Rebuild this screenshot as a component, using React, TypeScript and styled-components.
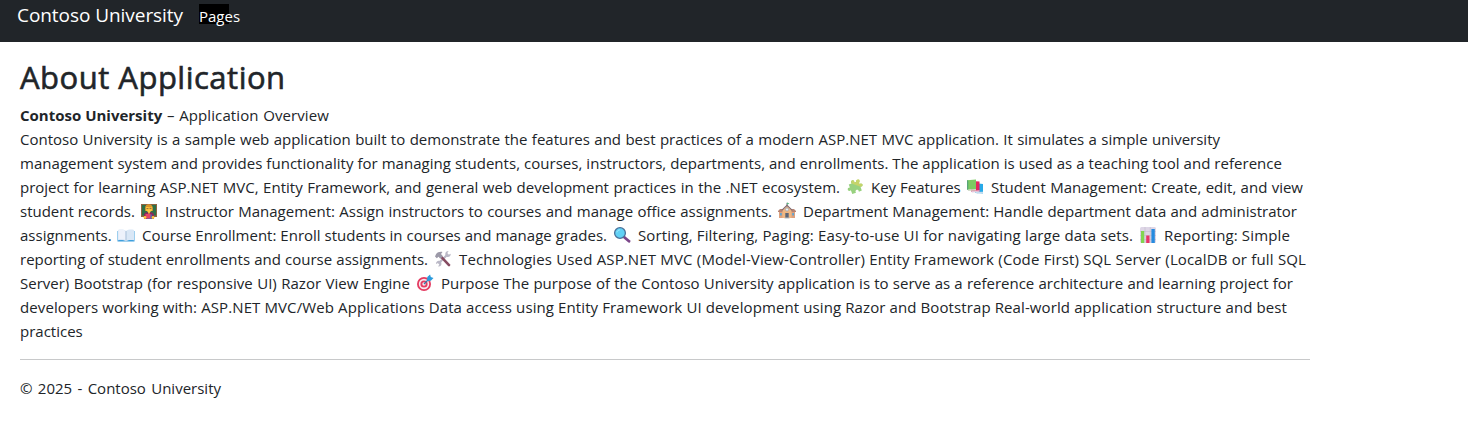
import React, { ReactNode } from "react";
import styled, { createGlobalStyle } from "styled-components";

const GlobalStyle = createGlobalStyle`
  body {
    margin: 0;
    background: #fff;
    color: #212529;
    font-family: "Segoe UI", "Open Sans", "Noto Sans", sans-serif;
    font-size: 15px;
    line-height: 24px;
  }
`;

const Navbar = styled.header`
  display: flex;
  align-items: flex-start;
  box-sizing: border-box;
  height: 42px;
  padding-left: 17px;
  background: #212529;
  color: #fff;
`;

const Brand = styled.a`
  width: 166px;
  margin-right: 16px;
  font-size: 19px;
  letter-spacing: -0.06px;
  line-height: 30px;
  white-space: nowrap;
  text-align-last: justify;
`;

const NavItem = styled.a`
  width: 30px;
  height: 20px;
  margin-top: 4px;
  background: #000;
  line-height: 25px;
  white-space: nowrap;
`;

const Main = styled.main`
  width: 1290px;
  padding: 16px 0 0 20px;
`;

const Title = styled.h1`
  margin: 0 0 7px;
  font-size: 31px;
  font-weight: 500;
  letter-spacing: 0.5px;
  line-height: 38px;
  -webkit-text-stroke: 0.6px #212529;
`;

const Line = styled.div`
  display: flex;
  height: 24px;
`;

const Run = styled.span<{ $width: number; $bold?: boolean; $tracking?: number }>`
  flex: none;
  width: ${(p) => p.$width}px;
  font-weight: ${(p) => (p.$bold ? 700 : 400)};
  letter-spacing: ${(p) => p.$tracking ?? 0}px;
  white-space: nowrap;
  text-align-last: justify;
`;

const Emoji = styled.svg`
  flex: none;
  width: 18px;
  height: 18px;
  margin: 3px 7px 0 6px;
`;

const Footer = styled.footer`
  margin-top: 16px;
  padding-top: 16px;
  border-top: 1px solid #c8c9ca;
`;

const Icon = ({ children }: { children: ReactNode }) => (
  <Emoji viewBox="0 0 18 18" aria-hidden="true">{children}</Emoji>
);

const Puzzle = () => (
  <Icon>
    <g transform="rotate(-20 9 9)">
      <path d="M4 4.5h3c-1.2-3.6 4.2-3.6 3 0h4.2v3.2c3.6-1.2 3.6 4.2 0 3v4H11c1-3.2-4-3.2-3 0H4v-4c-3.6 1.2-3.6-4.2 0-3Z" fill="#98d17f" />
      <path d="M10 4.5h4.2v3.2c3.6-1.2 3.6 4.2 0 3L7.2 4.5c-1-3.6 4-3.6 2.8 0Z" fill="#c5d46a" />
      <circle cx="13.7" cy="4.6" r="2" fill="#c5d46a" />
    </g>
  </Icon>
);

const Books = () => (
  <Icon>
    <path d="m8 5 9 1v9.5l-8-1Z" fill="#28a9e8" /><path d="m9 14 8-.3v1.8l-6 .2Z" fill="#c4dced" />
    <path d="m5 3 8.5.4v10l-8.5.3Z" fill="#e5265e" /><path d="m5 13 8.5-.8v1.5l-7.5.8Z" fill="#e3c9dc" />
    <path d="m1 2.2 9-.7v9.8l-9 .6Z" fill="#7ccb62" /><path d="m1 2.2 1.3.2v9.5L1 11.6Z" fill="#58a578" />
    <path d="m1.5 11.5 8.5-.6v1.5l-7.7.7Z" fill="#d2dbc9" />
  </Icon>
);

const Teacher = () => (
  <Icon>
    <path fill="#8f6541" d="M1 2h16v13H1Z" /><path fill="#2e7047" d="M2 3h14v10.5H2Z" />
    <path fill="#dc9431" d="M5.2 6C4.8 1 12.8 1 12.8 6v3H5.2Z" /><circle cx="9" cy="6.5" r="3.2" fill="#ffc83d" />
    <path fill="#da9129" d="M5.5 5.3c1-3 5-3.8 6.8 0-3 .5-4-.6-6.8 0Z" />
    <path d="M6.5 6.6h2m1 0h2" stroke="#7d4b3a" strokeWidth=".8" />
    <path fill="#8c285d" d="M4 17v-4c0-2 2-3 5-3s5 1 5 3v4Z" /><path fill="#ffc83d" d="M7.4 9h3.2L9 12.5Z" />
    <path fill="#4c63ac" d="M7 12.5h5V17H7Z" /><path fill="#e34466" d="M5.5 12h5v4.5h-5Z" />
    <circle cx="5" cy="15.5" r="1.4" fill="#ffc83d" /><circle cx="13" cy="15.5" r="1.4" fill="#ffc83d" />
  </Icon>
);

const School = () => (
  <Icon>
    <path d="M9 5V.8" stroke="#6d727c" /><path fill="#57b881" d="m9 .6 2.5.8L9 2.7Z" />
    <path fill="#dda17e" d="M1 9h16v7H1Z" /><path fill="#b78474" d="m0 9 2-2h14l2 2v1H0Z" />
    <path fill="#efb782" d="m4.5 8 4.5-4 4.5 4v8h-9Z" />
    <path d="m3.7 8.3 5.3-5 5.3 5" fill="none" stroke="#806a72" strokeWidth="1.1" />
    <circle cx="9" cy="7.5" r="1.6" fill="#eee" stroke="#8799ac" strokeWidth=".6" />
    <path fill="#5c6779" d="M7.3 11h3.4v5H7.3Z" /><path fill="#61a5cf" d="M2 11h1.8v2.5H2Zm12.2 0H16v2.5h-1.8Z" />
    <path fill="#bbb" d="M6.5 15.5h5v1h-5Z" />
  </Icon>
);

const OpenBook = () => (
  <Icon>
    <path fill="#3d9fdd" d="M.5 5h17v10.5H.5Z" /><path fill="#d9e7f6" d="M1 4c3-.8 6-.4 8 1 2-1.4 5-1.8 8-1v10.3c-3-.8-6-.4-8 1-2-1.4-5-1.8-8-1Z" />
    <path fill="#edf2fb" d="M1.5 4c3-.7 5.5-.4 7 1v9c-2-1.2-4.5-1.2-7-.8Z" />
    <path d="M9 5v9.8" stroke="#9eb9d3" strokeWidth=".8" />
  </Icon>
);

const Magnifier = () => (
  <Icon>
    <path d="m11 11 5 4.3" stroke="#7c468a" strokeWidth="2.8" strokeLinecap="round" />
    <circle cx="7" cy="7" r="5.4" fill="#61d1f5" stroke="#4a719a" strokeWidth="1.3" />
    <path d="M4 6c.3-1.3 1.3-2 2.5-2.1" fill="none" stroke="#a2edff" strokeLinecap="round" />
  </Icon>
);

const Chart = () => (
  <Icon>
    <rect x="1" y="1" width="16" height="16" rx="1.5" fill="#ded6e6" />
    <path d="M1 5.5h16M1 9.5h16M1 13.5h16M6 1v16M11.3 1v16" stroke="#c1bdcd" strokeWidth=".6" />
    <path fill="#82d550" d="M2 5h3.2v12H2Z" /><path fill="#e93468" d="M7.2 9.5h3.3V17H7.2Z" /><path fill="#268bdf" d="M12.4 3h3.4v14h-3.4Z" />
  </Icon>
);

const Tools = () => (
  <Icon>
    <path d="m14 4-9.5 9.5" stroke="#bab8c6" strokeWidth="2.1" />
    <path d="M11.6 5.4c-1-2.4.6-4.4 3-4.3l-1.4 2.2 1.3 1.4 2.2-1c.2 2.7-2 3.8-4 3Z" fill="#bab8c6" />
    <path d="M7.3 12.4c.8 2.6-1 4.3-3.2 4l1.2-2-1.2-1.3-2.1 1c-.2-2.4 1.8-3.9 4-3.1Z" fill="#bab8c6" />
    <path d="m7.5 7.2 7.5 7.9" stroke="#864b61" strokeWidth="2.5" strokeLinecap="round" />
    <path d="m1 6.6 1-2.3C3.5 2.2 6 1.5 8.5 2L7 4l2 2.3-2.7 2.4-1.8-2-1.7 1.5Z" fill="#9c99a8" />
  </Icon>
);

const Target = () => (
  <Icon>
    <circle cx="8" cy="10" r="7" fill="#e43b61" /><circle cx="8" cy="10" r="5.2" fill="#f9e9ef" />
    <circle cx="8" cy="10" r="3.6" fill="#e43b61" /><circle cx="8" cy="10" r="1.7" fill="#f9e9ef" />
    <path d="m8 10 6-6" stroke="#3678a5" strokeWidth="1.2" />
    <path fill="#2b9bdc" d="m11 6 .3-3 2.8-2.6.7 2.7 2.7.8-2.7 2.8-3 .2Z" />
  </Icon>
);

export default function App() {
  return (
    <>
      <GlobalStyle />
      <Navbar>
        <Brand>Contoso University</Brand>
        <NavItem>Pages</NavItem>
      </Navbar>
      <Main>
        <Title>About Application</Title>
        <Line><Run $width={142} $bold>Contoso University</Run><Run $width={5}>&nbsp;</Run><Run $width={162} $tracking={0.1}>– Application Overview</Run></Line>
        <Line><Run $width={1200}>Contoso University is a sample web application built to demonstrate the features and best practices of a modern ASP.NET MVC application. It simulates a simple university</Run></Line>
        <Line><Run $width={1262} $tracking={0.03}>management system and provides functionality for managing students, courses, instructors, departments, and enrollments. The application is used as a teaching tool and reference</Run></Line>
        <Line>
          <Run $width={820}>project for learning ASP.NET MVC, Entity Framework, and general web development practices in the .NET ecosystem.</Run>
          <Puzzle /><Run $width={89}>Key Features</Run>
          <Books /><Run $width={312}>Student Management: Create, edit, and view</Run>
        </Line>
        <Line>
          <Run $width={114}>student records.</Run>
          <Teacher /><Run $width={607}>Instructor Management: Assign instructors to courses and manage office assignments.</Run>
          <School /><Run $width={494}>Department Management: Handle department data and administrator</Run>
        </Line>
        <Line>
          <Run $width={91}>assignments.</Run>
          <OpenBook /><Run $width={465}>Course Enrollment: Enroll students in courses and manage grades.</Run>
          <Magnifier /><Run $width={495} $tracking={0.12}>Sorting, Filtering, Paging: Easy-to-use UI for navigating large data sets.</Run>
          <Chart /><Run $width={126} $tracking={0.14}>Reporting: Simple</Run>
        </Line>
        <Line>
          <Run $width={408}>reporting of student enrollments and course assignments.</Run>
          <Tools /><Run $width={847} $tracking={0.12}>Technologies Used ASP.NET MVC (Model-View-Controller) Entity Framework (Code First) SQL Server (LocalDB or full SQL</Run>
        </Line>
        <Line>
          <Run $width={390}>Server) Bootstrap (for responsive UI) Razor View Engine</Run>
          <Target /><Run $width={852}>Purpose The purpose of the Contoso University application is to serve as a reference architecture and learning project for</Run>
        </Line>
        <Line><Run $width={1267} $tracking={0.1}>developers working with: ASP.NET MVC/Web Applications Data access using Entity Framework UI development using Razor and Bootstrap Real-world application structure and best</Run></Line>
        <Line><Run $width={62}>practices</Run></Line>
        <Footer><Run as="div" $width={201}>© 2025 - Contoso University</Run></Footer>
      </Main>
    </>
  );
}
